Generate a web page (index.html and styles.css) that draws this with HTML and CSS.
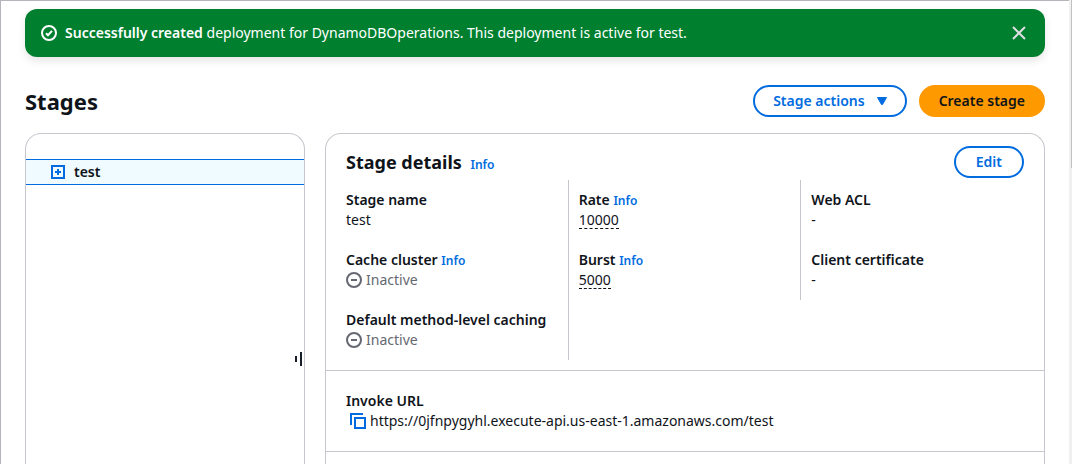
FILE: index.html
```html
<!DOCTYPE html>
<html lang="en">
<head>
<meta charset="utf-8">
<title>Stages</title>
<link rel="stylesheet" href="styles.css">
</head>
<body>
<div class="app">
  <main class="page">
    <div class="flash" role="status">
      <svg class="icon" viewBox="0 0 16 16" aria-hidden="true"><circle cx="8" cy="8" r="7"/><path d="M5 8.2l2 2 4-4.4"/></svg>
      <p class="flash-text"><strong>Successfully created</strong> deployment for DynamoDBOperations. This deployment is active for test.</p>
      <button class="flash-close" type="button" aria-label="Dismiss">
        <svg class="icon" viewBox="0 0 16 16" aria-hidden="true"><path d="M2 2l12 12M14 2L2 14"/></svg>
      </button>
    </div>

    <header class="page-header">
      <h1 class="page-title">Stages</h1>
      <div class="actions">
        <button class="button" type="button">Stage actions
          <svg class="caret" viewBox="0 0 10 8" aria-hidden="true"><path d="M.5.5h9L5.5 7.5h-1z"/></svg>
        </button>
        <button class="button primary" type="button">Create stage</button>
      </div>
    </header>

    <div class="split">
      <nav class="panel tree" aria-label="Stages">
        <div class="tree-item">
          <button class="expand" type="button" aria-label="Expand test">
            <svg class="expand-icon" viewBox="0 0 14 14" aria-hidden="true"><path d="M1 1h12v12H1zM4 7h6M7 4v6"/></svg>
          </button>
          <span class="tree-label">test</span>
        </div>
        <svg class="resize" viewBox="0 0 8 14" aria-hidden="true"><path d="M0 4h2v6H0zM5 0h2v14H5z"/></svg>
      </nav>

      <section class="panel details">
        <header class="details-header">
          <h2 class="details-title">Stage details <a class="info" href="#">Info</a></h2>
          <button class="button" type="button">Edit</button>
        </header>
        <div class="columns">
          <dl class="column">
            <div class="field"><dt>Stage name</dt><dd>test</dd></div>
            <div class="field"><dt>Cache cluster <a class="info" href="#">Info</a></dt>
              <dd class="inactive"><svg class="icon" viewBox="0 0 16 16" aria-hidden="true"><circle cx="8" cy="8" r="7"/><path d="M5 8h6"/></svg>Inactive</dd></div>
            <div class="field"><dt>Default method-level caching</dt>
              <dd class="inactive"><svg class="icon" viewBox="0 0 16 16" aria-hidden="true"><circle cx="8" cy="8" r="7"/><path d="M5 8h6"/></svg>Inactive</dd></div>
          </dl>
          <dl class="column">
            <div class="field"><dt>Rate <a class="info" href="#">Info</a></dt><dd><span class="hint">10000</span></dd></div>
            <div class="field"><dt>Burst <a class="info" href="#">Info</a></dt><dd><span class="hint">5000</span></dd></div>
          </dl>
          <dl class="column">
            <div class="field"><dt>Web ACL</dt><dd>-</dd></div>
            <div class="field"><dt>Client certificate</dt><dd>-</dd></div>
          </dl>
        </div>
        <dl class="invoke">
          <dt>Invoke URL</dt>
          <dd class="url">
            <button class="copy" type="button" aria-label="Copy invoke URL">
              <svg class="icon" viewBox="0 0 16 16" aria-hidden="true"><path d="M5 5h10v10H5zM1 12V1h12"/></svg>
            </button>
            <span>https://0jfnpygyhl.execute-api.us-east-1.amazonaws.com/test</span>
          </dd>
        </dl>
      </section>
    </div>
  </main>
  <div class="scroll-track" aria-hidden="true"><div class="scroll-thumb"></div></div>
</div>
</body>
</html>
```
FILE: styles.css
```css
* { box-sizing: border-box; }

body {
  margin: 0;
  background: #fff;
  color: #0f141a;
  font: 14px/20px "Noto Sans", "Open Sans", sans-serif;
}

h1, h2, p, dl, dd { margin: 0; }

strong { font-weight: 600; }

button { font: inherit; cursor: pointer; }

a { text-decoration: none; }

.app {
  display: flex;
  min-height: 100vh;
}

.page {
  flex: 1;
  display: flex;
  flex-direction: column;
  padding: 8px 24px 0;
  border: solid #b4b4bb;
  border-width: 1px 0 0 1px;
}

.icon {
  flex: none;
  display: block;
  width: 16px;
  height: 16px;
  fill: none;
  stroke: currentColor;
  stroke-width: 2;
}

.flash {
  display: flex;
  align-items: center;
  gap: 8px;
  min-height: 48px;
  padding: 8px 16px;
  border-radius: 12px;
  background: #00802f;
  color: #fff;
  box-shadow: 0 4px 8px rgba(0, 7, 22, 0.1);
}

.flash-text { flex: 1; }

.flash-close {
  padding: 2px;
  border: 0;
  background: none;
  color: #dedee3;
}

.page-header {
  display: flex;
  align-items: center;
  justify-content: space-between;
  padding: 28px 0 16px;
}

.page-title {
  font-size: 22px;
  line-height: 30px;
  font-weight: 700;
}

.actions { display: flex; gap: 12px; }

.button {
  display: flex;
  align-items: center;
  gap: 12px;
  padding: 4px 20px;
  border: 2px solid #006ce0;
  border-radius: 20px;
  background: #fff;
  color: #006ce0;
  font-weight: 600;
}

.actions .button { padding: 4px 18px; }

.primary {
  border-color: #ff9900;
  background: #ff9900;
  color: #0f141a;
}

.caret { width: 10px; height: 8px; fill: currentColor; stroke: currentColor; stroke-linejoin: round; }

.split {
  flex: 1;
  display: grid;
  grid-template-columns: 280px 1fr;
  gap: 20px;
}

.panel {
  border: 1px solid #c6c6cd;
  border-bottom: 0;
  border-radius: 16px 16px 0 0;
}

.tree {
  position: relative;
  padding-top: 25px;
}

.tree-item {
  display: flex;
  align-items: center;
  gap: 9px;
  padding: 2px 25px;
  border: solid #006ce0;
  border-width: 1px 0;
  background: #f0fbff;
}

.tree-label { font-weight: 600; }

.expand, .copy {
  padding: 0;
  border: 0;
  background: none;
  color: #006ce0;
}

.expand-icon {
  display: block;
  width: 14px;
  height: 14px;
  fill: none;
  stroke: currentColor;
  stroke-width: 2;
}

.resize {
  position: absolute;
  right: 1px;
  top: 218px;
  width: 8px;
  height: 14px;
  fill: #161d26;
}

.details-header {
  display: flex;
  align-items: center;
  justify-content: space-between;
  padding: 12px 20px 2px;
}

.details-title {
  font-size: 18px;
  line-height: 24px;
  font-weight: 700;
}

.info {
  color: #006ce0;
  font-size: 12px;
  line-height: 12px;
  font-weight: 600;
}

.details-title .info { margin-left: 4px; }

.columns {
  display: grid;
  grid-template-columns: repeat(3, 1fr);
  align-items: start;
  padding: 0 10px 10px;
}

.column { padding: 0 10px; }

.column:not(:last-child) { border-right: 1px solid #c6c6cd; }

.field { padding: 10px 0; }

dt { font-weight: 600; }

.inactive {
  display: flex;
  align-items: center;
  gap: 4px;
  color: #656871;
}

.hint {
  display: inline-block;
  vertical-align: top;
  padding-top: 2px;
  line-height: 16px;
  border-bottom: 1px dashed #0f141a;
}

.invoke {
  padding: 20px;
  border: solid #c6c6cd;
  border-width: 1px 0;
}

.url {
  display: flex;
  align-items: center;
  gap: 4px;
  padding-left: 4px;
}

.scroll-track {
  width: 3px;
  padding-left: 2px;
  background: #f0f0f0;
}

.scroll-thumb {
  height: 168px;
  background: #c1c1c1;
}
```
